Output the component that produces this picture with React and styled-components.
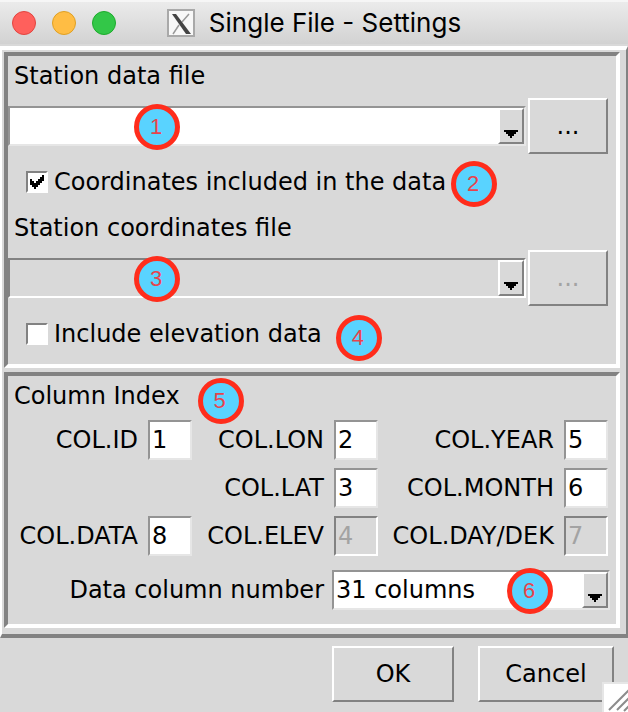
import React, { useId, useState } from "react";
import styled, { createGlobalStyle, css } from "styled-components";

const face = "#d9d9d9";
const shade = "#828282";
const light = "#ffffff";

const GlobalStyle = createGlobalStyle`
  *, *::before, *::after { box-sizing: border-box; }
  body {
    margin: 0;
    background: ${face};
    color: #000;
    font-family: "DejaVu Sans", sans-serif;
    font-size: 24px;
    line-height: 28px;
  }
  button, input, select { font: inherit; color: inherit; margin: 0; border-radius: 0; }
`;

const raised = css`
  border: 2px solid;
  border-color: ${light} ${shade} ${shade} ${light};
`;

const sunken = css`
  border: 2px solid;
  border-color: #949494 #e6e6e6 #e6e6e6 #949494;
`;

const sunkenDisabled = css`
  border: 2px solid;
  border-color: ${shade} ${light} ${light} ${shade};
`;

const Window = styled.div`
  position: relative;
  display: flex;
  flex-direction: column;
  min-height: 100vh;
  overflow: hidden;
  background: ${face};
`;

const TitleBar = styled.header`
  display: grid;
  grid-template-columns: 1fr auto 1fr;
  align-items: center;
  height: 46px;
  padding: 0 12px;
  border-top: 2px solid #f6f6f6;
  border-bottom: 2px solid ${face};
  background: linear-gradient(#ebebeb, #d2d2d2);
`;

const Lights = styled.div`
  display: flex;
  gap: 16px;
`;

const Light = styled.button`
  width: 24px;
  height: 24px;
  padding: 0;
  border: 1px solid ${(p) => p.$edge};
  border-radius: 50%;
  background: ${(p) => p.$fill};
`;

const Title = styled.h1`
  display: flex;
  align-items: center;
  gap: 14px;
  margin: 0;
  font: 400 26px/32px Inter, Roboto, sans-serif;
`;

const Frame = styled.main`
  display: flex;
  flex-direction: column;
  gap: 4px;
  padding: 2px 6px 6px 2px;
  border: solid;
  border-width: 4px 2px 4px 2px;
  border-color: ${light} ${shade} ${shade} ${light};
`;

const Panel = styled.section`
  padding: 2px 0;
  border: 4px solid;
  border-color: ${shade} ${light} ${light} ${shade};
`;

const Heading = styled.div`
  display: flex;
  align-items: center;
  gap: 18px;
  height: 36px;
  margin-bottom: 4px;
  padding-left: 6px;
`;

const FileRow = styled.div`
  display: flex;
  align-items: center;
  gap: 2px;
  padding-right: 8px;
`;

const CheckRow = styled.div`
  display: flex;
  align-items: center;
  height: 56px;
  padding-left: 18px;
  gap: ${(p) => p.$gap}px;
`;

const CheckLabel = styled.label`
  display: flex;
  align-items: center;
  gap: 6px;
`;

const CheckBox = styled.span`
  display: grid;
  & > * { grid-area: 1 / 1; }
  & > svg { pointer-events: none; display: none; }
  & > input:checked + svg { display: block; }
`;

const Tick = styled.input`
  appearance: none;
  width: 22px;
  height: 22px;
  background: #fff;
  ${sunkenDisabled}
`;

const PushButton = styled.button`
  width: ${(p) => p.$width}px;
  height: 56px;
  padding: 0;
  background: ${face};
  ${raised}
  &:disabled { color: #a3a3a3; }
`;

const ComboBox = styled.div`
  position: relative;
  display: grid;
  flex: ${(p) => (p.$width ? `0 0 ${p.$width}px` : "1")};
  height: 40px;
  & > select, & > span { grid-area: 1 / 1; }
`;

const ComboSelect = styled.select`
  appearance: none;
  width: 100%;
  height: 40px;
  padding: 0 30px 0 2px;
  background: #fff;
  ${sunken}
  &:disabled {
    opacity: 1;
    background: ${face};
    ${sunkenDisabled}
  }
`;

const ArrowBox = styled.span`
  justify-self: end;
  display: flex;
  align-items: flex-end;
  justify-content: center;
  width: 26px;
  height: 36px;
  margin: 2px;
  padding-bottom: 4px;
  background: ${face};
  pointer-events: none;
  ${raised}
`;

const BadgeCircle = styled.span`
  display: flex;
  align-items: center;
  justify-content: center;
  flex: none;
  width: 46px;
  height: 46px;
  padding-right: 2px;
  border: 5px solid #ff2d1c;
  border-radius: 50%;
  background: #59d3ff;
  color: #e8434c;
  font: 22px/24px "Liberation Sans", sans-serif;
`;

const OverlayBadge = styled(BadgeCircle)`
  position: absolute;
  top: -2px;
  ${(p) => (p.$right ? `right: ${p.$right}px;` : `left: ${p.$left}px;`)}
`;

const LowBadge = styled(BadgeCircle)`
  margin-top: ${(p) => p.$drop}px;
`;

const Fields = styled.div`
  display: grid;
  grid-template-columns: 132fr 44px 126fr 44px 170fr 44px;
  gap: 8px;
  align-items: center;
  padding: 2px 8px 0 0;
`;

const FieldLabel = styled.label`
  grid-column: ${(p) => p.$column};
  padding-right: 2px;
  text-align: right;
  white-space: nowrap;
`;

const Field = styled.input`
  width: 44px;
  height: 40px;
  padding: 0 2px;
  background: #fff;
  ${sunken}
  &:disabled {
    background: ${face};
    color: #a3a3a3;
    ${sunkenDisabled}
  }
`;

const ColumnCountRow = styled.div`
  display: flex;
  align-items: center;
  justify-content: flex-end;
  gap: 8px;
  padding: 14px 6px 12px 0;
`;

const Footer = styled.footer`
  display: flex;
  justify-content: flex-end;
  gap: 24px;
  padding: 8px 14px 10px;
`;

const Grip = styled.span`
  position: absolute;
  right: 0;
  bottom: 0;
  width: 26px;
  height: 30px;
  border: solid #e6e6e6;
  border-width: 2px 0 0 2px;
  background: #fff;
  & > svg { display: block; }
`;

function XIcon() {
  return (
    <svg width="28" height="28" viewBox="0 0 28 28" aria-hidden="true">
      <rect x="1" y="1" width="26" height="26" fill="#f8f8f8" stroke="#a9a9a9" strokeWidth="2" />
      <path d="M22 5 15 13M12 16 6 25" stroke="#999" strokeWidth="1.5" />
      <path d="M5 5h4l15 20h-5z" fill="#444" />
    </svg>
  );
}

function Combo({ id, badge, left, right, width, options, ...rest }) {
  return (
    <ComboBox $width={width}>
      <ComboSelect id={id} {...rest}>
        {options.map((o) => <option key={o}>{o}</option>)}
      </ComboSelect>
      <ArrowBox>
        <svg width="14" height="8" viewBox="0 0 14 8" shapeRendering="crispEdges" aria-hidden="true">
          <path d="M0 0h14v2h-2v2h-2v2H8v2H6V6H4V4H2V2H0z" />
        </svg>
      </ArrowBox>
      <OverlayBadge $left={left} $right={right}>{badge}</OverlayBadge>
    </ComboBox>
  );
}

function FileChooser({ label, badge, disabled }) {
  const id = useId();
  return (
    <>
      <Heading><label htmlFor={id}>{label}</label></Heading>
      <FileRow>
        <Combo id={id} badge={badge} left={126} options={[""]} disabled={disabled} />
        <PushButton $width={80} disabled={disabled} aria-label={`Browse: ${label}`}>...</PushButton>
      </FileRow>
    </>
  );
}

function Check({ label, checked, onChange }) {
  return (
    <CheckLabel>
      <CheckBox>
        <Tick type="checkbox" checked={checked} onChange={(e) => onChange(e.target.checked)} />
        <svg width="22" height="22" viewBox="0 0 22 22" shapeRendering="crispEdges" aria-hidden="true">
          <path d="M4 8h2v2h2v2h2v-2h2V8h2V6h2V4h2v6h-2v2h-2v2h-2v2h-2v2H8v-2H6v-2H4z" />
        </svg>
      </CheckBox>
      {label}
    </CheckLabel>
  );
}

const fields = [
  { label: "COL.ID", value: "1", column: 1 },
  { label: "COL.LON", value: "2", column: 3 },
  { label: "COL.YEAR", value: "5", column: 5 },
  { label: "COL.LAT", value: "3", column: 3 },
  { label: "COL.MONTH", value: "6", column: 5 },
  { label: "COL.DATA", value: "8", column: 1 },
  { label: "COL.ELEV", value: "4", column: 3, disabled: true },
  { label: "COL.DAY/DEK", value: "7", column: 5, disabled: true },
];

export default function App() {
  const [included, setIncluded] = useState(true);
  const [elevation, setElevation] = useState(false);
  return (
    <>
      <GlobalStyle />
      <Window>
        <TitleBar>
          <Lights>
            <Light aria-label="Close" $fill="#ff605c" $edge="#e2443f" />
            <Light aria-label="Minimize" $fill="#ffbd44" $edge="#dfa023" />
            <Light aria-label="Zoom" $fill="#33c748" $edge="#1dab2c" />
          </Lights>
          <Title><XIcon />Single File - Settings</Title>
        </TitleBar>
        <Frame>
          <Panel>
            <FileChooser label="Station data file" badge="1" />
            <CheckRow $gap={5}>
              <Check label="Coordinates included in the data" checked={included} onChange={setIncluded} />
              <LowBadge $drop={4}>2</LowBadge>
            </CheckRow>
            <FileChooser label="Station coordinates file" badge="3" disabled />
            <CheckRow $gap={14}>
              <Check label="Include elevation data" checked={elevation} onChange={setElevation} />
              <LowBadge $drop={8}>4</LowBadge>
            </CheckRow>
          </Panel>
          <Panel>
            <Heading>Column Index<LowBadge $drop={10}>5</LowBadge></Heading>
            <Fields>
              {fields.map((f) => (
                <React.Fragment key={f.label}>
                  <FieldLabel htmlFor={f.label} $column={f.column}>{f.label}</FieldLabel>
                  <Field id={f.label} defaultValue={f.value} disabled={f.disabled} />
                </React.Fragment>
              ))}
            </Fields>
            <ColumnCountRow>
              <label htmlFor="column-count">Data column number</label>
              <Combo id="column-count" badge="6" right={57} width={278} options={["31 columns"]} />
            </ColumnCountRow>
          </Panel>
        </Frame>
        <Footer>
          <PushButton $width={122}>OK</PushButton>
          <PushButton $width={136}>Cancel</PushButton>
        </Footer>
        <Grip>
          <svg width="24" height="28" viewBox="0 0 24 28" fill="none" stroke="#8c8c8c" strokeWidth="2" aria-hidden="true">
            <path d="M5 26 25 6M13 26 25 14M20 27l5-5" />
          </svg>
        </Grip>
      </Window>
    </>
  );
}
